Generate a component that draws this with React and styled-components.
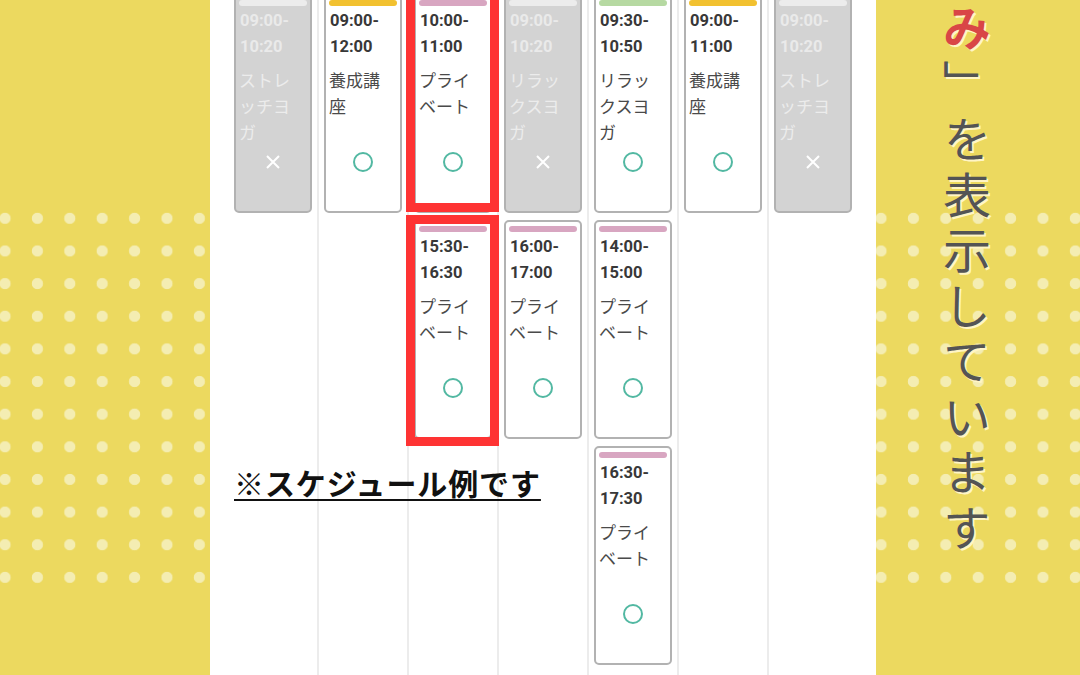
import React from "react";
import styled, { createGlobalStyle } from "styled-components";

const Global = createGlobalStyle`
  html, body { margin: 0; padding: 0; background: #fff; overflow: hidden; }
  body { font-family: Roboto, "Noto Sans CJK JP", sans-serif; }
`;

const Page = styled.div`
  width: 1080px;
  height: 675px;
  display: flex;
  overflow: hidden;
`;

const SidePanel = styled.aside`
  flex: 0 0 ${(p) => p.$w}px;
  height: 675px;
  background: #ecd95f;
  display: grid;
  grid-template: 1fr / 1fr;
  overflow: hidden;
`;

const DotField = styled.div`
  grid-area: 1 / 1;
  align-self: start;
  margin-top: 202px;
  height: 392px;
  background-image: radial-gradient(circle, #f4edb2 0 5.2px, rgba(244, 237, 178, 0) 6px);
  background-size: 32.4px 32.65px;
  background-position: -11.2px 0;
`;

const VerticalText = styled.p`
  grid-area: 1 / 1;
  align-self: start;
  justify-self: start;
  margin: 4px 0 0 67px;
  writing-mode: vertical-rl;
  font-family: "Noto Sans CJK JP", sans-serif;
  font-weight: 400;
  font-size: 48px;
  line-height: 48px;
  letter-spacing: 7.5px;
  color: #545454;
  text-shadow: 2px 2px 0 #fff5c6;
  white-space: nowrap;
`;

const Accent = styled.span`
  color: #d94646;
  font-weight: 700;
`;

const Schedule = styled.main`
  position: relative;
  flex: 0 0 666px;
  height: 675px;
  box-sizing: border-box;
  padding: 0 19px 0 17px;
  background: #fff;
`;

const Columns = styled.div`
  display: grid;
  grid-template-columns: repeat(7, 90px);
  margin-top: -6px;
  height: 681px;
`;

const DayColumn = styled.div`
  box-sizing: border-box;
  display: flex;
  flex-direction: column;
  align-items: center;
  gap: 7px;
  border-left: 2px solid ${(p) => (p.$first ? "transparent" : "#ececec")};
`;

const Card = styled.div`
  position: relative;
  flex: none;
  box-sizing: border-box;
  width: 78px;
  height: 219px;
  padding: 4px 3px 0;
  border: 2px solid #b2b2b2;
  border-radius: 5px;
  background: ${(p) => (p.$off ? "#d3d3d3" : "#fff")};
  display: flex;
  flex-direction: column;
`;

const Bar = styled.div`
  height: 6px;
  border-radius: 3px;
  background: ${(p) => p.$color};
`;

const Time = styled.div`
  margin: 2px 0 0 1px;
  font-family: Roboto, "Noto Sans CJK JP", sans-serif;
  font-weight: 700;
  font-size: 16.5px;
  line-height: 26px;
  color: ${(p) => (p.$off ? "#eaeaea" : "#383838")};
`;

const Name = styled.div`
  margin: 7px 0 0 0;
  width: 54px;
  height: 79px;
  font-family: "Noto Sans CJK JP", sans-serif;
  font-weight: 400;
  font-size: 17px;
  line-height: 26px;
  line-break: anywhere;
  word-break: break-all;
  color: ${(p) => (p.$off ? "#ececec" : "#4a4a4a")};
`;

const Status = styled.div`
  margin-top: 6px;
  height: 20px;
  display: flex;
  justify-content: center;
  align-items: center;
`;

const Ring = styled.span`
  box-sizing: border-box;
  width: 20px;
  height: 20px;
  border: 2px solid #52b8a2;
  border-radius: 50%;
`;

const Highlight = styled.div`
  position: absolute;
  pointer-events: none;
  top: ${(p) => p.$top}px;
  bottom: ${(p) => p.$bottom}px;
  left: -10px;
  right: -9px;
  border: 9px solid #fe3333;
`;

const Note = styled.p`
  position: absolute;
  left: 24px;
  top: 464px;
  margin: 0;
  font-family: "Noto Sans CJK JP", sans-serif;
  font-weight: 700;
  font-size: 30px;
  line-height: 36px;
  letter-spacing: 0.9px;
  color: #111;
  text-decoration: underline;
  text-decoration-thickness: 2px;
  text-underline-offset: 4px;
  white-space: nowrap;
`;

const COLORS = {
  off: "#ececec",
  pink: "#d8a6c1",
  yellow: "#f2c130",
  green: "#b6d9a2",
};

const Cross = () => (
  <svg width="14" height="14" viewBox="0 0 14 14">
    <path d="M1 1L13 13M13 1L1 13" stroke="#fff" strokeWidth="2" />
  </svg>
);

const days = [
  [{ off: true, bar: "off", from: "09:00", to: "10:20", name: "ストレッチヨガ" }],
  [{ bar: "yellow", from: "09:00", to: "12:00", name: "養成講座" }],
  [
    { bar: "pink", from: "10:00", to: "11:00", name: "プライベート", hl: { top: -12, bottom: -1 } },
    { bar: "pink", from: "15:30", to: "16:30", name: "プライベート", hl: { top: -7, bottom: -9 } },
  ],
  [
    { off: true, bar: "off", from: "09:00", to: "10:20", name: "リラックスヨガ" },
    { bar: "pink", from: "16:00", to: "17:00", name: "プライベート" },
  ],
  [
    { bar: "green", from: "09:30", to: "10:50", name: "リラックスヨガ" },
    { bar: "pink", from: "14:00", to: "15:00", name: "プライベート" },
    { bar: "pink", from: "16:30", to: "17:30", name: "プライベート" },
  ],
  [{ bar: "yellow", from: "09:00", to: "11:00", name: "養成講座" }],
  [{ off: true, bar: "off", from: "09:00", to: "10:20", name: "ストレッチヨガ" }],
];

function LessonCard({ item }) {
  return (
    <Card $off={item.off}>
      <Bar $color={COLORS[item.bar]} />
      <Time $off={item.off}>
        {item.from}-
        <br />
        {item.to}
      </Time>
      <Name $off={item.off}>{item.name}</Name>
      <Status>{item.off ? <Cross /> : <Ring />}</Status>
      {item.hl && <Highlight $top={item.hl.top} $bottom={item.hl.bottom} />}
    </Card>
  );
}

export default function App() {
  return (
    <>
      <Global />
      <Page lang="ja">
        <SidePanel $w={210}>
          <DotField />
        </SidePanel>
        <Schedule>
          <Columns>
            {days.map((items, i) => (
              <DayColumn key={i} $first={i === 0}>
                {items.map((item, j) => (
                  <LessonCard key={j} item={item} />
                ))}
              </DayColumn>
            ))}
          </Columns>
          <Note>※スケジュール例です</Note>
        </Schedule>
        <SidePanel $w={204}>
          <DotField />
          <VerticalText>
            <Accent>み</Accent>」を表示しています
          </VerticalText>
        </SidePanel>
      </Page>
    </>
  );
}
